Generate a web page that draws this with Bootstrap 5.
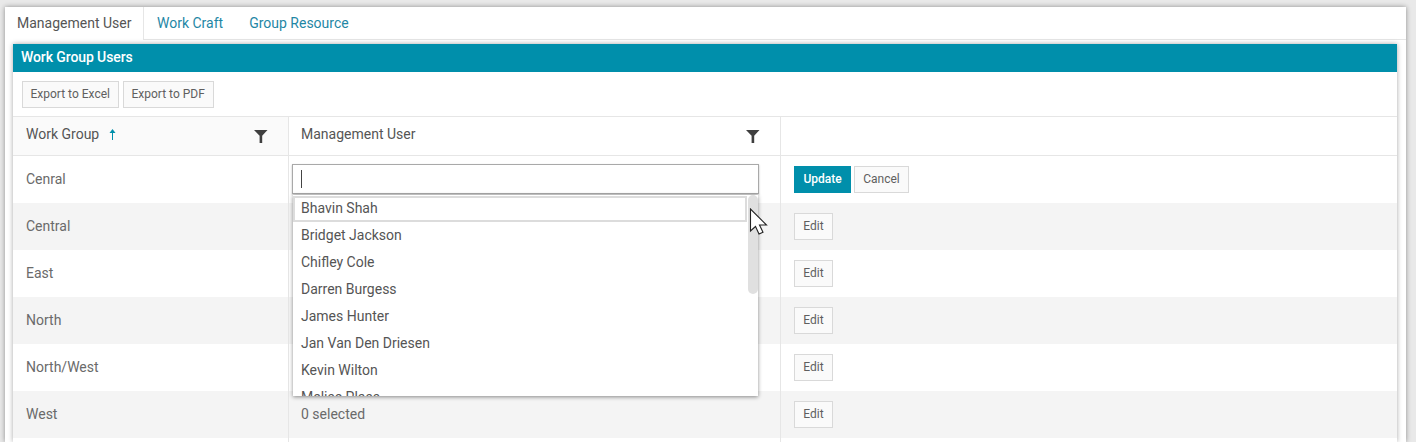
<!DOCTYPE html>
<html lang="en">
<head>
<meta charset="utf-8">
<title>Work Group Users</title>
<link href="https://cdn.jsdelivr.net/npm/bootstrap@5.3.0/dist/css/bootstrap.min.css" rel="stylesheet">
<style>
html,body{height:442px;overflow:hidden}
body{background:#e9e9e9;font-family:Roboto,"Liberation Sans",sans-serif;font-size:14px;color:#656565;padding:7px 10px 0 5px;position:relative}
.shell{background:#fff;height:435px;box-shadow:0 0 5px rgba(0,0,0,.4);overflow:hidden}
.tabbar{height:33px;border-bottom:1px solid #e6e6e6;margin:0;padding:0;list-style:none;display:flex}
.tabbar a{display:block;height:33px;padding:0 13px;line-height:32px;color:#1f87a5;text-decoration:none;font-size:14px;white-space:nowrap}
.tabbar .on a{color:#555;background:#fff;border-right:1px solid #e6e6e6;padding:0 12px;width:139px;height:33px}
.panel-in{margin:4px 9px 0 8px;box-shadow:0 0 5px rgba(0,0,0,.35);background:#fff;height:398px;overflow:hidden;position:relative}
.phead{background:#008fab;color:#fff;font-weight:500;height:28px;line-height:27px;padding-left:8px;font-size:14px;letter-spacing:-.1px}
.tools{height:44px;padding:9px;display:flex;gap:4px;align-items:flex-start}
.tbtn{height:27px;border:1px solid #d9d9d9;background:#fafafa;color:#5f5f5f;font-size:12px;padding:0 8px 0 7.5px;line-height:25px;border-radius:0}
.grid{width:100%;table-layout:fixed;border-collapse:collapse;border-top:1px solid #e6e6e6}
.grid th,.grid td{padding:0 12px;border-right:1px solid #e6e6e6;vertical-align:middle;font-weight:400}
.grid th:first-child,.grid td:first-child{padding-left:13px}
.grid th{height:39px;border-bottom:1px solid #e6e6e6;color:#555;vertical-align:top}
.grid th:first-child{background:#fafafa}
.grid th:last-child,.grid td:last-child{border-right:0}
.grid td{height:47px;color:#6a6a6a}
.grid tr.alt td{background:#f4f4f4}
.hcell{display:flex;align-items:center;justify-content:space-between;padding-right:8px;height:35px}
.hcell>span{display:flex;align-items:center;gap:10px}
.sortup{width:7px;height:11px;display:block}
.funnel{display:block;width:14px;height:14px;margin-top:3px}
.editcell{position:relative}
.picker{position:absolute;left:3px;top:8px;width:467px;height:30px;background:#fff;border:1px solid #a9a9a9;box-shadow:0 1px 2px rgba(0,0,0,.25)}
.caret-bar{position:absolute;left:8px;top:5px;width:1px;height:18px;background:#444}
.drop{position:absolute;left:4px;top:39px;width:465px;height:201px;background:#fff;box-shadow:0 1px 4px rgba(0,0,0,.45);overflow:hidden;z-index:5}
.drop ul{list-style:none;margin:0;padding:0 11px 0 0}
.drop li{height:27px;line-height:27px;padding-left:8px;color:#555}
.drop li.hot{background:#fff;margin-top:1px;height:26px;line-height:24px;box-shadow:inset 0 0 0 2px #dcdcdc}
.track{position:absolute;right:0;top:0;bottom:0;width:11px;background:#fff}
.thumb{position:absolute;right:0;top:0;width:10px;height:99px;background:#e0e0e0;border-radius:5px}
.rbtn{height:27px;min-width:39px;border:1px solid #d9d9d9;background:#fafafa;color:#5f5f5f;font-size:12px;padding:0 8px;line-height:25px;border-radius:0}
.rbtn.go{background:#008fab;border-color:#008fab;color:#fff;font-weight:500;padding:0 8.5px}
.actions{display:flex;gap:3px;margin-left:1px}
.pointer{position:absolute;left:749px;top:208px;width:20px;height:28px;z-index:9}
</style>
</head>
<body>
<div class="shell">
  <ul class="tabbar">
    <li class="on"><a href="#">Management User</a></li>
    <li><a href="#">Work Craft</a></li>
    <li><a href="#">Group Resource</a></li>
  </ul>
  <div class="panel-in">
    <div class="phead">Work Group Users</div>
    <div class="tools">
      <button class="tbtn" type="button">Export to Excel</button>
      <button class="tbtn" type="button">Export to PDF</button>
    </div>
    <table class="grid">
      <colgroup><col style="width:275.5px"><col style="width:492px"><col></colgroup>
      <thead>
        <tr>
          <th><div class="hcell"><span>Work Group
            <svg class="sortup" viewBox="0 0 7 11"><path d="M3.5 0 6.5 4H4V11H3V4H.5z" fill="#008fab"/></svg></span>
            <svg class="funnel" viewBox="0 0 14 14"><path d="M0 1h13.5L8.2 6.8V14H5.6V6.8z" fill="#3f3f3f"/></svg></div></th>
          <th><div class="hcell"><span>Management User</span>
            <svg class="funnel" viewBox="0 0 14 14"><path d="M0 1h13.5L8.2 6.8V14H5.6V6.8z" fill="#3f3f3f"/></svg></div></th>
          <th></th>
        </tr>
      </thead>
      <tbody>
        <tr>
          <td>Cenral</td>
          <td class="editcell">
            <div class="picker"><span class="caret-bar"></span></div>
            <div class="drop">
              <ul>
                <li class="hot">Bhavin Shah</li>
                <li>Bridget Jackson</li>
                <li>Chifley Cole</li>
                <li>Darren Burgess</li>
                <li>James Hunter</li>
                <li>Jan Van Den Driesen</li>
                <li>Kevin Wilton</li>
                <li>Melise Plass</li>
              </ul>
              <div class="track"><div class="thumb"></div></div>
            </div>
          </td>
          <td><div class="actions"><button class="rbtn go" type="button">Update</button><button class="rbtn" type="button">Cancel</button></div></td>
        </tr>
        <tr class="alt"><td>Central</td><td></td><td><div class="actions"><button class="rbtn" type="button">Edit</button></div></td></tr>
        <tr><td>East</td><td></td><td><div class="actions"><button class="rbtn" type="button">Edit</button></div></td></tr>
        <tr class="alt"><td>North</td><td></td><td><div class="actions"><button class="rbtn" type="button">Edit</button></div></td></tr>
        <tr><td>North/West</td><td></td><td><div class="actions"><button class="rbtn" type="button">Edit</button></div></td></tr>
        <tr class="alt"><td>West</td><td>0 selected</td><td><div class="actions"><button class="rbtn" type="button">Edit</button></div></td></tr>
        <tr><td></td><td></td><td></td></tr>
      </tbody>
    </table>
  </div>
</div>
<svg class="pointer" viewBox="0 0 20 28"><path d="M1.5 1v22l5-4.5 3.5 7.5 4-1.7-3.5-7.3h7z" fill="#fff" stroke="#222" stroke-width="1.1"/></svg>
</body>
</html>
